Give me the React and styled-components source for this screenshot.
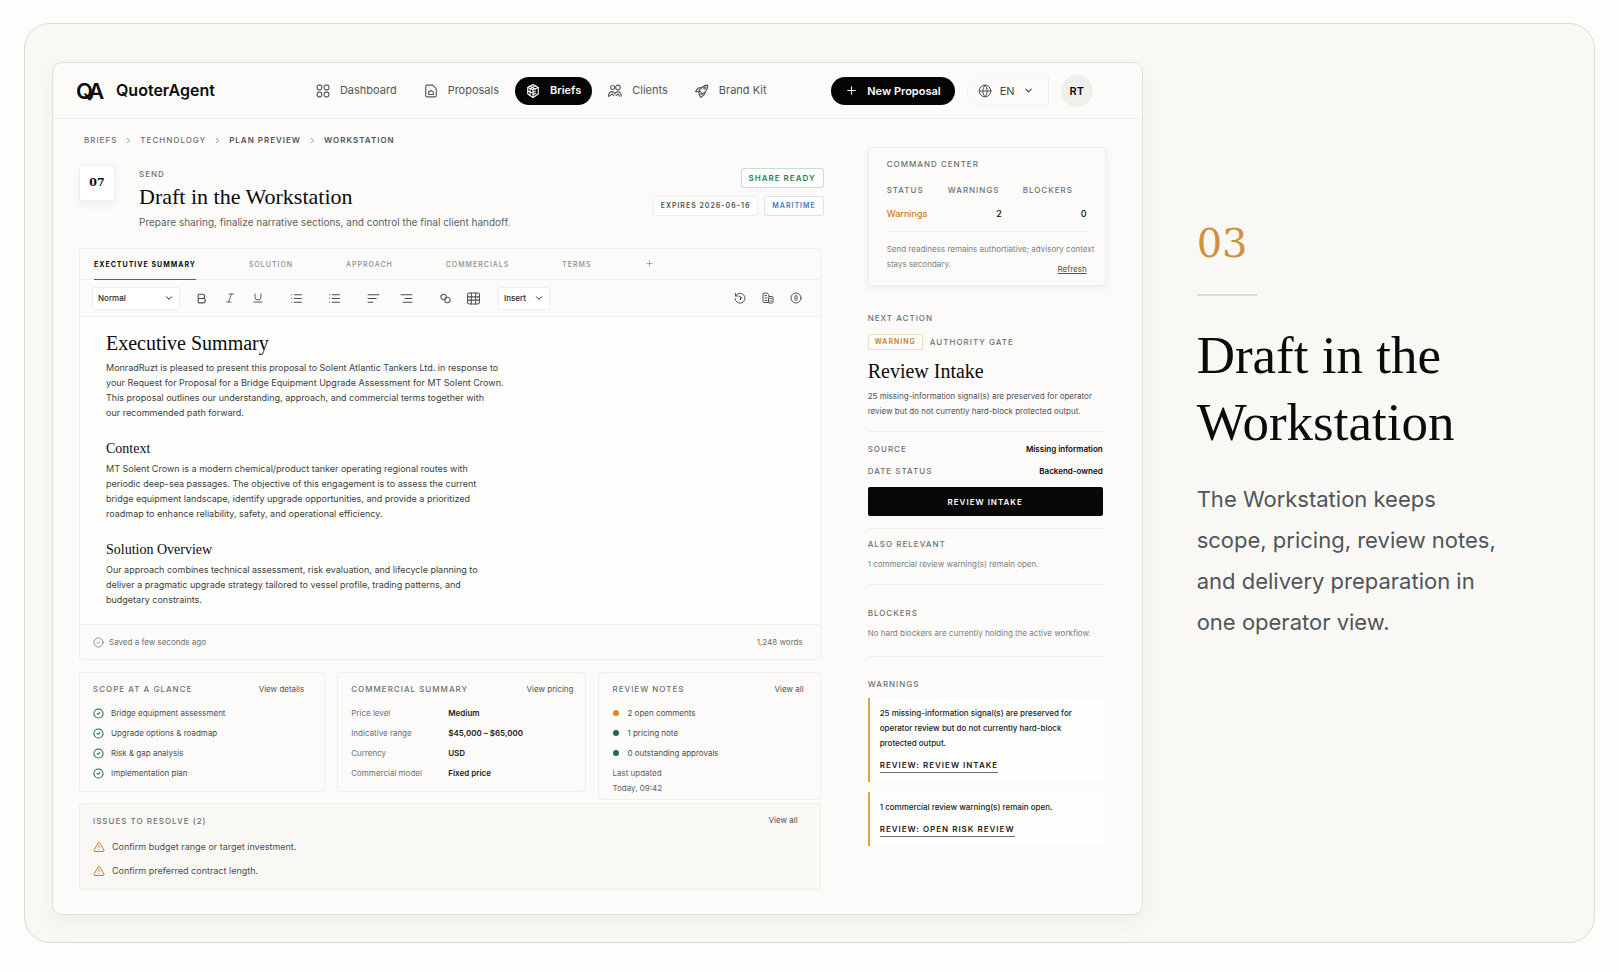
import React from "react";
import styled, { createGlobalStyle } from "styled-components";
import {
  Bold,
  ChevronDown,
  ChevronRight,
  CircleCheck,
  Globe,
  Italic,
  List,
  Plus,
  TriangleAlert,
  Underline,
} from "lucide-react";

const ink = "#0b0b0b";
const line = "#efeeeb";
const muted = "#6d7072";
const amber = "#d07a22";
const green = "#1c6b4c";
const serif = `"Liberation Serif", serif`;
const numeral = `"DejaVu Serif", serif`;

const App = () => {
  return (
    <Page>
      <GlobalStyle />
      <Frame>
        <Window>
          <TopBar />
          <Body>
            <Main>
              <Crumbs />
              <BriefHeader />
              <Editor />
              <Summaries />
              <Issues />
            </Main>
            <SideBar />
          </Body>
        </Window>
        <Intro>
          <Step>03</Step>
          <Rule />
          <IntroTitle>Draft in the Workstation</IntroTitle>
          <IntroText>
            The Workstation keeps scope, pricing, review notes, and delivery
            preparation in one operator view.
          </IntroText>
        </Intro>
      </Frame>
    </Page>
  );
};

const navLinks = [
  { name: "Dashboard", icon: "grid" },
  { name: "Proposals", icon: "file" },
  { name: "Briefs", icon: "box", active: true },
  { name: "Clients", icon: "people" },
  { name: "Brand Kit", icon: "rocket" },
];

const TopBar = () => (
  <Header>
    <Brand href="#">
      <Logo />
      QuoterAgent
    </Brand>
    <Nav>
      {navLinks.map((item) => (
        <NavLink href="#" key={item.name} $active={item.active}>
          <Glyph name={item.icon} size={14} />
          {item.name}
        </NavLink>
      ))}
    </Nav>
    <Actions>
      <NewButton>
        <Plus size={13} strokeWidth={2} />
        New Proposal
      </NewButton>
      <Language>
        <Globe size={14} strokeWidth={1.6} />
        <LanguageSelect aria-label="Language">
          <option>EN</option>
        </LanguageSelect>
        <ChevronDown size={11} strokeWidth={2.4} />
      </Language>
      <Avatar>RT</Avatar>
    </Actions>
  </Header>
);

const Crumbs = () => (
  <CrumbRow aria-label="Breadcrumb">
    <Crumb href="#">BRIEFS</Crumb>
    <ChevronRight size={9} />
    <Crumb href="#">TECHNOLOGY</Crumb>
    <ChevronRight size={9} />
    <Crumb href="#" $strong>
      PLAN PREVIEW
    </Crumb>
    <ChevronRight size={9} />
    <Crumb href="#" $strong>
      WORKSTATION
    </Crumb>
  </CrumbRow>
);

const BriefHeader = () => (
  <BriefRow>
    <NumberBox>07</NumberBox>
    <BriefText>
      <Label>SEND</Label>
      <BriefTitle>Draft in the Workstation</BriefTitle>
      <BriefSub>
        Prepare sharing, finalize narrative sections, and control the final
        client handoff.
      </BriefSub>
    </BriefText>
    <Pills>
      <Pill $tone="green">SHARE READY</Pill>
      <PillRow>
        <Pill>EXPIRES 2026-06-16</Pill>
        <Pill $tone="blue">MARITIME</Pill>
      </PillRow>
    </Pills>
  </BriefRow>
);

const Editor = () => (
  <EditorCard>
    <Tabs>
      <Tab $active>EXECTUTIVE SUMMARY</Tab>
      <Tab>SOLUTION</Tab>
      <Tab>APPROACH</Tab>
      <Tab>COMMERCIALS</Tab>
      <Tab>TERMS</Tab>
      <Tab aria-label="Add section">
        <Plus size={9} />
      </Tab>
    </Tabs>
    <Toolbar>
      <SelectBox $wide>
        <StyleSelect aria-label="Text style">
          <option>Normal</option>
        </StyleSelect>
        <ChevronDown size={10} strokeWidth={2.4} />
      </SelectBox>
      <ToolGroup $gap={15}>
        <Tool aria-label="Bold">
          <Bold size={13} />
        </Tool>
        <Tool aria-label="Italic">
          <Italic size={12} strokeWidth={1.6} />
        </Tool>
        <Tool aria-label="Underline">
          <Underline size={12} strokeWidth={1.8} />
        </Tool>
      </ToolGroup>
      <ToolGroup $gap={25}>
        <Tool aria-label="Bulleted list">
          <List size={13} />
        </Tool>
        <Tool aria-label="Numbered list">
          <List size={13} />
        </Tool>
      </ToolGroup>
      <ToolGroup $gap={20}>
        <Tool aria-label="Align left">
          <Glyph name="left" size={13} />
        </Tool>
        <Tool aria-label="Align right">
          <Glyph name="right" size={13} />
        </Tool>
      </ToolGroup>
      <ToolGroup $gap={15} $after={18}>
        <Tool aria-label="Link">
          <Glyph name="link" size={13} />
        </Tool>
        <Tool aria-label="Table">
          <Glyph name="table" size={13} />
        </Tool>
      </ToolGroup>
      <SelectBox>
        <StyleSelect aria-label="Insert">
          <option>Insert</option>
        </StyleSelect>
        <ChevronDown size={10} strokeWidth={2.4} />
      </SelectBox>
      <ToolEnd>
        <Tool aria-label="History">
          <Glyph name="history" size={12} />
        </Tool>
        <Tool aria-label="Documents">
          <Glyph name="docs" size={12} />
        </Tool>
        <Tool aria-label="Information">
          <Glyph name="info" size={12} />
        </Tool>
      </ToolEnd>
    </Toolbar>
    <Document>
      <DocTitle>Executive Summary</DocTitle>
      <DocText>
        MonradRuzt is pleased to present this proposal to Solent Atlantic
        Tankers Ltd. in response to
        <br />
        your Request for Proposal for a Bridge Equipment Upgrade Assessment for
        MT Solent Crown.
        <br />
        This proposal outlines our understanding, approach, and commercial
        terms together with
        <br />
        our recommended path forward.
      </DocText>
      <DocHeading>Context</DocHeading>
      <DocText>
        MT Solent Crown is a modern chemical/product tanker operating regional
        routes with
        <br />
        periodic deep-sea passages. The objective of this engagement is to
        assess the current
        <br />
        bridge equipment landscape, identify upgrade opportunities, and provide
        a prioritized
        <br />
        roadmap to enhance reliability, safety, and operational efficiency.
      </DocText>
      <DocHeading>Solution Overview</DocHeading>
      <DocText>
        Our approach combines technical assessment, risk evaluation, and
        lifecycle planning to
        <br />
        deliver a pragmatic upgrade strategy tailored to vessel profile,
        trading patterns, and
        <br />
        budgetary constraints.
      </DocText>
    </Document>
    <StatusBar>
      <Saved>
        <CircleCheck size={11} strokeWidth={1.6} />
        Saved a few seconds ago
      </Saved>
      <span>1,248 words</span>
    </StatusBar>
  </EditorCard>
);

const scope = [
  "Bridge equipment assessment",
  "Upgrade options & roadmap",
  "Risk & gap analysis",
  "Implementation plan",
];

const pricing = [
  ["Price level", "Medium"],
  ["Indicative range", "$45,000 – $65,000"],
  ["Currency", "USD"],
  ["Commercial model", "Fixed price"],
];

const notes = [
  ["2 open comments", "#d98a1c"],
  ["1 pricing note", green],
  ["0 outstanding approvals", green],
];

const Summaries = () => (
  <SummaryGrid>
    <Card>
      <CardHead $inset={8}>
        <Label as="h3">SCOPE AT A GLANCE</Label>
        <CardLink href="#">View details</CardLink>
      </CardHead>
      <CardList>
        {scope.map((item) => (
          <CardItem key={item}>
            <CircleCheck size={11} strokeWidth={2.2} color={green} />
            {item}
          </CardItem>
        ))}
      </CardList>
    </Card>
    <Card>
      <CardHead>
        <Label as="h3">COMMERCIAL SUMMARY</Label>
        <CardLink href="#">View pricing</CardLink>
      </CardHead>
      <PriceTable>
        <tbody>
          {pricing.map(([name, value]) => (
            <tr key={name}>
              <th scope="row">{name}</th>
              <td>{value}</td>
            </tr>
          ))}
        </tbody>
      </PriceTable>
    </Card>
    <Card>
      <CardHead $inset={4}>
        <Label as="h3">REVIEW NOTES</Label>
        <CardLink href="#">View all</CardLink>
      </CardHead>
      <CardList>
        {notes.map(([text, color]) => (
          <CardItem key={text}>
            <Dot $color={color} />
            {text}
          </CardItem>
        ))}
      </CardList>
      <Updated>
        Last updated
        <br />
        Today, 09:42
      </Updated>
    </Card>
  </SummaryGrid>
);

const Issues = () => (
  <IssueCard>
    <CardHead $inset={10}>
      <Label as="h3">ISSUES TO RESOLVE (2)</Label>
      <CardLink href="#">View all</CardLink>
    </CardHead>
    <IssueList>
      <Issue>
        <TriangleAlert size={12} strokeWidth={2} color={amber} />
        Confirm budget range or target investment.
      </Issue>
      <Issue>
        <TriangleAlert size={12} strokeWidth={2} color={amber} />
        Confirm preferred contract length.
      </Issue>
    </IssueList>
  </IssueCard>
);

const SideBar = () => (
  <Side>
    <CommandCard>
      <Label as="h3">COMMAND CENTER</Label>
      <CommandTable>
        <thead>
          <tr>
            <th>STATUS</th>
            <th>WARNINGS</th>
            <th>BLOCKERS</th>
          </tr>
        </thead>
        <tbody>
          <tr>
            <td>Warnings</td>
            <td>2</td>
            <td>0</td>
          </tr>
        </tbody>
      </CommandTable>
      <CommandNote>
        Send readiness remains authortiative; advisory context
        <NoteEnd>
          stays secondary.
          <Refresh>Refresh</Refresh>
        </NoteEnd>
      </CommandNote>
    </CommandCard>
    <Section>
      <Label as="h3">NEXT ACTION</Label>
      <BadgeRow>
        <Badge>WARNING</Badge>
        <Label>AUTHORITY GATE</Label>
      </BadgeRow>
      <ActionTitle>Review Intake</ActionTitle>
      <ActionText>
        25 missing-information signal(s) are preserved for operator review but
        do not currently hard-block protected output.
      </ActionText>
    </Section>
    <Section $top={6}>
      <Fact>
        <Label>SOURCE</Label>
        <strong>Missing information</strong>
      </Fact>
      <Fact>
        <Label>DATE STATUS</Label>
        <strong>Backend-owned</strong>
      </Fact>
      <IntakeButton>REVIEW INTAKE</IntakeButton>
    </Section>
    <Section $top={9}>
      <Label as="h3">ALSO RELEVANT</Label>
      <SideText>1 commercial review warning(s) remain open.</SideText>
    </Section>
    <Section $top={22} $bottom={15}>
      <Label as="h3">BLOCKERS</Label>
      <SideText>
        No hard blockers are currently holding the active workflow.
      </SideText>
    </Section>
    <Section $top={21}>
      <Label as="h3">WARNINGS</Label>
      <WarningList>
        <Warning>
          25 missing-information signal(s) are preserved for operator review
          but do not currently hard-block protected output.
          <WarningLink href="#">REVIEW: REVIEW INTAKE</WarningLink>
        </Warning>
        <Warning>
          1 commercial review warning(s) remain open.
          <WarningLink href="#">REVIEW: OPEN RISK REVIEW</WarningLink>
        </Warning>
      </WarningList>
    </Section>
  </Side>
);

const Logo = () => (
  <svg width="29" height="28" viewBox="0 0 29 28" aria-hidden="true">
    <text
      x="-1"
      y="22"
      fontFamily="Inter, sans-serif"
      fontSize="22"
      fontWeight="600"
      fill={ink}
    >
      Q<tspan dx="-4">A</tspan>
    </text>
  </svg>
);

const shapes = {
  grid: (
    <>
      <rect x="2" y="2" width="8" height="8" rx="3" />
      <rect x="14" y="2" width="8" height="8" rx="3" />
      <rect x="2" y="14" width="8" height="8" rx="3" />
      <rect x="14" y="14" width="8" height="8" rx="3" />
    </>
  ),
  file: (
    <>
      <path d="M3 4a2 2 0 0 1 2-2h10l6 6v12a2 2 0 0 1-2 2H5a2 2 0 0 1-2-2z" />
      <path d="M8 18v-5h2l2-2 4 3v4z" />
    </>
  ),
  box: (
    <>
      <path d="M12 1l9 5v11l-9 6-9-6V6z" />
      <path d="M3 6l9 4 9-4M12 10v13M7 4l9 5M16 3L7 8v11M16 12l-4 3M17 16l-5 3M3 12l9 4" />
    </>
  ),
  people: (
    <>
      <circle cx="8" cy="6" r="3.500" />
      <circle cx="17" cy="6" r="4" />
      <path d="M1 21c0-5 3-8 6-8 2 0 4 1 5 4 1-3 3-4 5-4 3 0 5 3 6 8M2 21l5-4 3 3M14 20l3-3 3 4" />
    </>
  ),
  rocket: (
    <>
      <path d="M12 6c3-3 6-4 10-4 0 4-1 8-4 11l-5 4-6-6z" />
      <path d="M12 6L5 7l-4 6h6M18 13l-2 5-6 5-3-5v-6M7 18l6-1" />
      <circle cx="17" cy="7" r="2" />
    </>
  ),
  left: <path d="M2 5h20M2 12h15M2 19h9" />,
  right: <path d="M2 5h20M9 12h13M6 19h16" />,
  link: (
    <>
      <path d="M10 14a5 5 0 1 1 3-7c1 2 1 4-1 6" />
      <path d="M14 10a5 5 0 1 1-3 7c-1-2-1-4 1-6" />
    </>
  ),
  table: (
    <>
      <rect x="1" y="2" width="22" height="20" rx="3" />
      <path d="M1 9h22M1 15h22M8 2v20M16 2v20" />
    </>
  ),
  history: (
    <>
      <path d="M3 8a10 10 0 1 1-1 5M3 3v5h5" />
      <path d="M11 9h2v6M13 12h3" />
    </>
  ),
  docs: (
    <>
      <path d="M13 21H4a2 2 0 0 1-2-2V4a2 2 0 0 1 2-2h6l4 4v3" />
      <path d="M6 7h3M6 12h4M6 17h4" />
      <rect x="13" y="9" width="9" height="13" rx="2" />
      <path d="M16 13h3M16 18h3" />
    </>
  ),
  info: (
    <>
      <circle cx="12" cy="12" r="10" />
      <rect x="10" y="7" width="4" height="10" rx="2" />
    </>
  ),
};

const Glyph = ({ name, size }) => (
  <svg
    width={size}
    height={size}
    viewBox="0 0 24 24"
    fill="none"
    stroke="currentColor"
    strokeWidth="1.9"
    strokeLinecap="round"
    strokeLinejoin="round"
    aria-hidden="true"
  >
    {shapes[name]}
  </svg>
);

const GlobalStyle = createGlobalStyle`
  * {
    box-sizing: border-box;
  }
  body {
    margin: 0;
    background-color: #fefdfb;
    color: ${ink};
    font-family: Inter, sans-serif;
    font-size: 9px;
    line-height: 15px;
  }
  h1, h2, h3, h4, p, ul {
    margin: 0;
    padding: 0;
  }
  button, select {
    font-family: inherit;
    color: inherit;
    padding: 0;
    border: none;
    background: none;
    cursor: pointer;
  }
  a {
    color: inherit;
    text-decoration: none;
  }
  svg {
    flex-shrink: 0;
  }
`;

const Page = styled.div`
  min-height: 100vh;
  padding: 23px 24px 29px;
  display: flex;
`;

const Frame = styled.div`
  flex: 1;
  display: grid;
  grid-template-columns: 29fr 12fr;
  align-items: start;
  padding: 38px 0 27px 27px;
  border: 1px solid #dddbd7;
  border-radius: 26px;
  background-color: #faf8f5;
  @media screen and (max-width: 1200px) {
    grid-template-columns: 1fr;
    padding-right: 27px;
  }
`;

const Window = styled.div`
  min-width: 0;
  align-self: stretch;
  border: 1px solid #e2e0dc;
  border-radius: 10px;
  background-color: #fcfbf9;
  box-shadow: 0 8px 20px rgba(60, 50, 30, 0.05);
`;

const Header = styled.header`
  display: flex;
  align-items: center;
  height: 56px;
  padding: 0 49px 0 24px;
  border-bottom: 1px solid ${line};
`;

const Brand = styled.a`
  display: flex;
  align-items: center;
  gap: 10px;
  font-size: 16px;
  font-weight: 600;
`;

const Nav = styled.nav`
  display: flex;
  gap: 5px;
  margin: 0 auto 0 90px;
`;

const NavLink = styled.a`
  display: flex;
  align-items: center;
  gap: 10px;
  height: 28px;
  padding: 0 11px;
  border-radius: 14px;
  font-size: 11px;
  font-weight: ${({ $active }) => ($active ? 600 : 400)};
  color: ${({ $active }) => ($active ? "#fff" : "#54575a")};
  background-color: ${({ $active }) => ($active ? "#050505" : "transparent")};
`;

const Actions = styled.div`
  display: flex;
  align-items: center;
`;

const NewButton = styled.button`
  display: flex;
  align-items: center;
  gap: 9px;
  height: 28px;
  padding: 0 14px;
  margin-right: 12px;
  border-radius: 14px;
  background-color: #050505;
  color: #fff;
  font-size: 11px;
  font-weight: 600;
`;

const Language = styled.div`
  display: flex;
  align-items: center;
  gap: 8px;
  height: 30px;
  padding: 0 14px 0 10px;
  margin-right: 12px;
  border: 1px solid #f5f4f1;
  border-right-color: ${line};
  border-radius: 14px 0 0 14px;
  color: #44474a;
`;

const LanguageSelect = styled.select`
  appearance: none;
  font-size: 11px;
`;

const Avatar = styled.div`
  width: 32px;
  height: 32px;
  border-radius: 50%;
  background-color: #f1efec;
  font-size: 11px;
  font-weight: 600;
  line-height: 32px;
  text-align: center;
`;

const Body = styled.div`
  display: grid;
  grid-template-columns: minmax(0, 1fr) 238px;
  gap: 47px;
  padding: 0 36px 22px 26px;
  @media screen and (max-width: 900px) {
    grid-template-columns: 1fr;
  }
`;

const Main = styled.main`
  min-width: 0;
`;

const Label = styled.div`
  font-size: 8px;
  font-weight: 500;
  line-height: 12px;
  letter-spacing: 1px;
  color: ${muted};
`;

const CrumbRow = styled.nav`
  display: flex;
  align-items: center;
  gap: 7px;
  padding: 15px 5px 19px;
  line-height: 12px;
  color: ${muted};
`;

const Crumb = styled.a`
  font-size: 8px;
  letter-spacing: 1px;
  font-weight: ${({ $strong }) => ($strong ? 600 : 500)};
  color: ${({ $strong }) => ($strong ? "#505356" : muted)};
`;

const BriefRow = styled.div`
  display: flex;
  align-items: flex-start;
  margin: 0 -3px 18px 0;
`;

const NumberBox = styled.div`
  width: 36px;
  height: 36px;
  margin-right: 24px;
  border: 1px solid ${line};
  border-radius: 3px;
  background-color: #fff;
  box-shadow: 0 4px 8px rgba(60, 50, 30, 0.06);
  font-family: ${numeral};
  font-size: 11px;
  font-weight: 700;
  line-height: 34px;
  text-align: center;
`;

const BriefText = styled.div`
  flex: 1;
  padding-top: 3px;
`;

const BriefTitle = styled.h1`
  margin: 3px 0 5px;
  font-family: ${serif};
  font-size: 22px;
  font-weight: 400;
  line-height: 27px;
`;

const BriefSub = styled.p`
  font-size: 10px;
  line-height: 15px;
  color: #5c5f61;
`;

const Pills = styled.div`
  display: flex;
  flex-direction: column;
  align-items: flex-end;
  gap: 8px;
  padding-top: 3px;
`;

const PillRow = styled.div`
  display: flex;
  gap: 6px;
`;

const tones = {
  green: ["#2e7d55", "#c6dfd2"],
  blue: ["#4479c4", "#dbe5f2"],
};

const Pill = styled.span`
  padding: 3px 7px;
  border: 1px solid ${({ $tone }) => ($tone ? tones[$tone][1] : line)};
  border-radius: 2px;
  background-color: #fdfdfc;
  color: ${({ $tone }) => ($tone ? tones[$tone][0] : "#505356")};
  font-size: ${({ $tone }) => ($tone === "green" ? 8 : 7)}px;
  font-weight: 600;
  line-height: 12px;
  letter-spacing: 1px;
`;

const EditorCard = styled.section`
  border: 1px solid ${line};
  border-radius: 3px;
  margin-bottom: 12px;
`;

const Tabs = styled.div`
  display: flex;
  gap: 53px;
  padding-left: 14px;
  border-bottom: 1px solid ${line};
`;

const Tab = styled.button`
  height: 31px;
  margin-bottom: -1px;
  border-bottom: 1px solid
    ${({ $active }) => ($active ? "#5d6062" : "transparent")};
  color: ${({ $active }) => ($active ? ink : "#8b8d8f")};
  font-size: 7px;
  font-weight: ${({ $active }) => ($active ? 700 : 500)};
  letter-spacing: 1px;
`;

const Toolbar = styled.div`
  display: flex;
  align-items: center;
  height: 37px;
  padding: 0 17px 0 12px;
  border-bottom: 1px solid ${line};
  color: #4b4e50;
`;

const SelectBox = styled.div`
  display: flex;
  align-items: center;
  justify-content: space-between;
  width: ${({ $wide }) => ($wide ? 88 : 52)}px;
  height: 23px;
  padding: 0 5px;
  margin-right: ${({ $wide }) => ($wide ? 15 : 0)}px;
  border: 1px solid ${line};
  border-radius: 2px;
  background-color: #fff;
  color: #222;
`;

const StyleSelect = styled.select`
  appearance: none;
  font-size: 8px;
  font-weight: 500;
`;

const ToolGroup = styled.div`
  display: flex;
  gap: ${({ $gap }) => $gap}px;
  margin-right: ${({ $after }) => $after || 26}px;
`;

const ToolEnd = styled(ToolGroup)`
  gap: 15px;
  margin: 0 0 0 auto;
`;

const Tool = styled.button`
  display: flex;
  align-items: center;
  justify-content: center;
  width: 13px;
  height: 16px;
`;

const Document = styled.article`
  padding: 14px 26px 17px;
  background-color: #fefefd;
`;

const DocTitle = styled.h2`
  margin-bottom: 4px;
  font-family: ${serif};
  font-size: 20px;
  font-weight: 400;
  line-height: 25px;
`;

const DocHeading = styled.h3`
  margin: 19px 0 2px;
  font-family: ${serif};
  font-size: 14px;
  font-weight: 400;
  line-height: 20px;
`;

const DocText = styled.p`
  color: #3c3e40;
`;

const StatusBar = styled.div`
  display: flex;
  align-items: center;
  justify-content: space-between;
  height: 35px;
  padding: 0 17px 0 13px;
  border-top: 1px solid ${line};
  font-size: 8px;
  color: ${muted};
`;

const Saved = styled.div`
  display: flex;
  align-items: center;
  gap: 5px;
`;

const SummaryGrid = styled.div`
  display: grid;
  grid-template-columns: 246fr 249fr 222fr;
  gap: 12px;
  align-items: start;
  margin-bottom: 3px;
`;

const Card = styled.section`
  padding: 8px 12px 8px 13px;
  border: 1px solid ${line};
  border-radius: 3px;
  line-height: 20px;
`;

const CardHead = styled.div`
  display: flex;
  align-items: center;
  justify-content: space-between;
  height: 15px;
  margin-bottom: 7px;
  padding-right: ${({ $inset }) => $inset || 0}px;
`;

const CardLink = styled.a`
  font-size: 8px;
  color: #505356;
`;

const CardList = styled.ul`
  list-style-type: none;
`;

const CardItem = styled.li`
  display: flex;
  align-items: center;
  gap: 7px;
  font-size: 8px;
  color: #4b4e50;
`;

const Dot = styled.span`
  width: 6px;
  height: 6px;
  margin: 0 1px;
  border-radius: 50%;
  background-color: ${({ $color }) => $color};
`;

const PriceTable = styled.table`
  border-collapse: collapse;
  font-size: 8px;
  th,
  td {
    padding: 0;
    text-align: left;
  }
  th {
    width: 97px;
    font-weight: 400;
    color: ${muted};
  }
  td {
    font-weight: 600;
    color: #222;
  }
`;

const Updated = styled.p`
  padding-top: 3px;
  margin-bottom: -5px;
  font-size: 8px;
  line-height: 15px;
  color: #5c5f61;
`;

const IssueCard = styled.section`
  padding: 9px 12px 6px 13px;
  border: 1px solid ${line};
  border-radius: 3px;
  background-color: #faf8f5;
`;

const IssueList = styled.ul`
  list-style-type: none;
`;

const Issue = styled.li`
  display: flex;
  align-items: center;
  gap: 7px;
  line-height: 24px;
  color: #4b4e50;
`;

const Side = styled.aside`
  padding-top: 28px;
`;

const CommandCard = styled.section`
  padding: 10px 18px 9px;
  margin-bottom: 26px;
  border: 1px solid ${line};
  border-radius: 3px;
  box-shadow: 0 3px 8px rgba(60, 50, 30, 0.06);
`;

const CommandTable = styled.table`
  width: 100%;
  margin: 13px 0 10px;
  table-layout: fixed;
  border-collapse: collapse;
  border-bottom: 1px solid ${line};
  th,
  td {
    padding: 0;
    text-align: left;
  }
  th {
    padding-bottom: 8px;
    font-size: 8px;
    font-weight: 500;
    letter-spacing: 1px;
    color: ${muted};
  }
  td {
    padding-bottom: 10px;
    font-weight: 500;
    text-align: right;
  }
  td:first-child {
    text-align: left;
    color: ${amber};
  }
  th:first-child {
    width: 61px;
  }
  th:nth-child(2) {
    width: 54px;
  }
  th:last-child {
    padding-left: 21px;
  }
`;

const CommandNote = styled.div`
  margin-right: -14px;
  font-size: 8px;
  line-height: 15px;
  color: #7d7f81;
`;

const NoteEnd = styled.div`
  display: flex;
  justify-content: space-between;
  padding-right: 14px;
`;

const Refresh = styled.button`
  padding-top: 5px;
  font-size: 8px;
  line-height: 14px;
  text-decoration: underline;
  color: #505356;
`;

const Section = styled.section`
  padding: ${({ $top }) => $top || 0}px 3px
    ${({ $bottom }) => $bottom || 12}px 0;
  & + & {
    border-top: 1px solid ${line};
  }
`;

const BadgeRow = styled.div`
  display: flex;
  align-items: center;
  gap: 7px;
  margin: 10px 0 9px;
`;

const Badge = styled.span`
  padding: 1px 6px;
  border: 1px solid #efdcc4;
  border-radius: 1px;
  background-color: #fffefb;
  color: ${amber};
  font-size: 7px;
  font-weight: 600;
  line-height: 12px;
  letter-spacing: 1px;
`;

const ActionTitle = styled.h2`
  margin-bottom: 5px;
  font-family: ${serif};
  font-size: 20px;
  font-weight: 400;
  line-height: 25px;
`;

const ActionText = styled.p`
  font-size: 8px;
  color: #505356;
`;

const Fact = styled.div`
  display: flex;
  align-items: center;
  justify-content: space-between;
  height: 22px;
  strong {
    font-size: 8px;
    font-weight: 600;
  }
`;

const IntakeButton = styled.button`
  width: 100%;
  height: 29px;
  margin-top: 5px;
  border-radius: 2px;
  background-color: #080808;
  color: #fff;
  font-size: 8px;
  font-weight: 600;
  letter-spacing: 1px;
`;

const SideText = styled.p`
  margin-top: 7px;
  font-size: 8px;
  color: #7d7f81;
`;

const WarningList = styled.div`
  display: flex;
  flex-direction: column;
  gap: 10px;
  margin-top: 8px;
`;

const Warning = styled.div`
  padding: 8px 16px 9px 10px;
  border-left: 2px solid #dfa24a;
  background-color: #fefefd;
  font-size: 8px;
  font-weight: 500;
  color: #222;
`;

const WarningLink = styled.a`
  display: block;
  width: max-content;
  margin-top: 8px;
  border-bottom: 1px solid #6d7072;
  font-weight: 600;
  line-height: 13px;
  letter-spacing: 1px;
`;

const Intro = styled.section`
  padding: 153px 60px 40px 54px;
`;

const Step = styled.p`
  font-family: ${numeral};
  font-size: 40px;
  line-height: 56px;
  color: #d0903c;
`;

const Rule = styled.hr`
  width: 60px;
  height: 2px;
  margin: 23px 0 26px;
  border: none;
  background-color: #dcdad6;
`;

const IntroTitle = styled.h2`
  max-width: 300px;
  font-family: ${serif};
  font-size: 53px;
  font-weight: 400;
  line-height: 67px;
`;

const IntroText = styled.p`
  max-width: 310px;
  margin-top: 23px;
  font-size: 22px;
  font-weight: 400;
  line-height: 41px;
  color: #50555a;
`;

export default App;
